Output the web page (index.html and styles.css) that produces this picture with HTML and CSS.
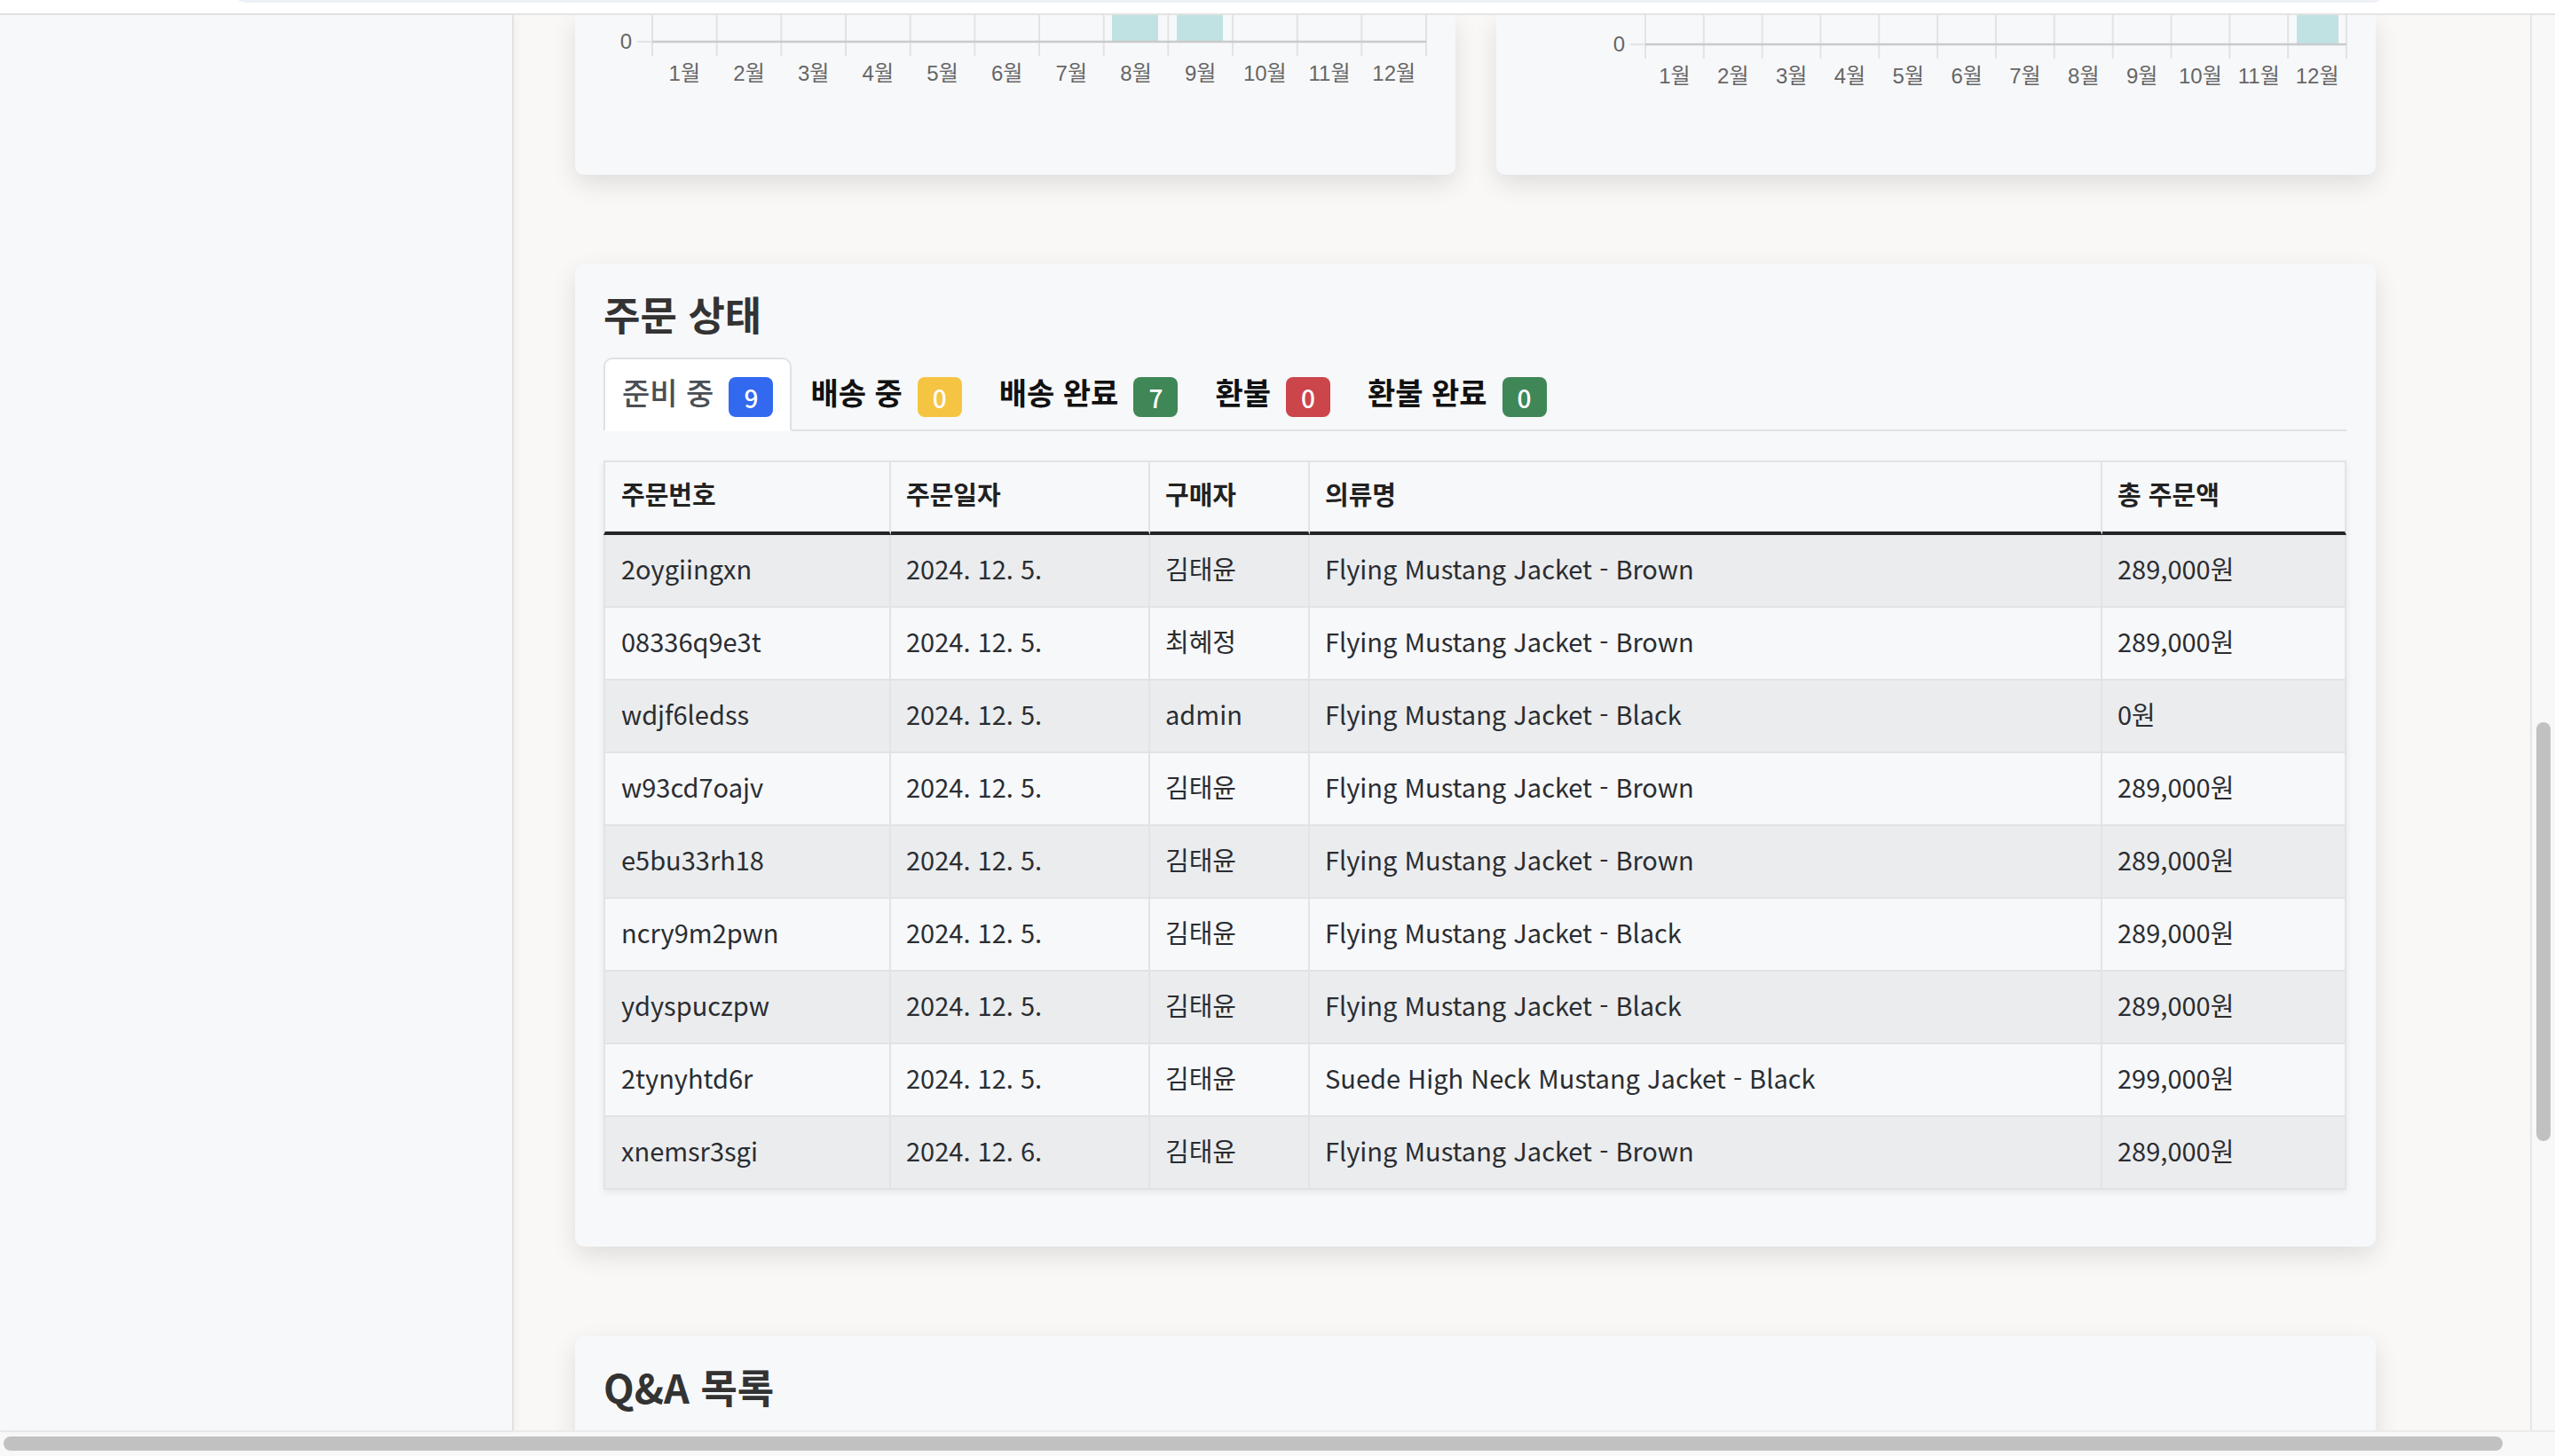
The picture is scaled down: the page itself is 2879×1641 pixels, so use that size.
FILE: index.html
```html
<!DOCTYPE html>
<html lang="ko">
<head>
<meta charset="utf-8">
<title>관리자 대시보드</title>
<link rel="stylesheet" href="styles.css">
</head>
<body>
<div class="app">
  <header class="topbar"><div class="topbar-clip"><div class="topbar-pill"></div></div></header>
  <div class="body-row">
    <aside class="sidebar"></aside>
    <main class="main">
      <div class="charts">
        <section class="card chart-card">
          <svg class="chart" width="992" height="180" viewBox="0 0 992 180">
            <rect class="bar" x="605" y="0" width="52" height="30"/>
            <rect class="bar" x="678" y="0" width="52" height="30"/>
            <g class="grid">
              <line x1="87" y1="0" x2="87" y2="46"/>
              <line x1="159.7" y1="0" x2="159.7" y2="46"/>
              <line x1="232.3" y1="0" x2="232.3" y2="46"/>
              <line x1="305" y1="0" x2="305" y2="46"/>
              <line x1="377.7" y1="0" x2="377.7" y2="46"/>
              <line x1="450.3" y1="0" x2="450.3" y2="46"/>
              <line x1="523" y1="0" x2="523" y2="46"/>
              <line x1="595.7" y1="0" x2="595.7" y2="46"/>
              <line x1="668.3" y1="0" x2="668.3" y2="46"/>
              <line x1="741" y1="0" x2="741" y2="46"/>
              <line x1="813.7" y1="0" x2="813.7" y2="46"/>
              <line x1="886.3" y1="0" x2="886.3" y2="46"/>
              <line x1="959" y1="0" x2="959" y2="46"/>
              <line x1="70" y1="30" x2="87" y2="30"/>
            </g>
            <line class="axis" x1="87" y1="30" x2="959" y2="30"/>
            <text class="ylabel" x="64" y="38">0</text>
            <g class="xlabels">
              <text x="123.3" y="74">1월</text>
              <text x="196" y="74">2월</text>
              <text x="268.7" y="74">3월</text>
              <text x="341.3" y="74">4월</text>
              <text x="414" y="74">5월</text>
              <text x="486.7" y="74">6월</text>
              <text x="559.3" y="74">7월</text>
              <text x="632" y="74">8월</text>
              <text x="704.7" y="74">9월</text>
              <text x="777.3" y="74">10월</text>
              <text x="850" y="74">11월</text>
              <text x="922.7" y="74">12월</text>
            </g>
          </svg>
        </section>
        <section class="card chart-card">
          <svg class="chart" width="991" height="180" viewBox="0 0 991 180">
            <rect class="bar" x="902" y="0" width="47" height="33"/>
            <g class="grid">
              <line x1="168" y1="0" x2="168" y2="49"/>
              <line x1="233.8" y1="0" x2="233.8" y2="49"/>
              <line x1="299.7" y1="0" x2="299.7" y2="49"/>
              <line x1="365.5" y1="0" x2="365.5" y2="49"/>
              <line x1="431.3" y1="0" x2="431.3" y2="49"/>
              <line x1="497.2" y1="0" x2="497.2" y2="49"/>
              <line x1="563" y1="0" x2="563" y2="49"/>
              <line x1="628.8" y1="0" x2="628.8" y2="49"/>
              <line x1="694.7" y1="0" x2="694.7" y2="49"/>
              <line x1="760.5" y1="0" x2="760.5" y2="49"/>
              <line x1="826.3" y1="0" x2="826.3" y2="49"/>
              <line x1="892.2" y1="0" x2="892.2" y2="49"/>
              <line x1="958" y1="0" x2="958" y2="49"/>
              <line x1="151" y1="33" x2="168" y2="33"/>
            </g>
            <line class="axis" x1="168" y1="33" x2="958" y2="33"/>
            <text class="ylabel" x="145" y="41">0</text>
            <g class="xlabels">
              <text x="200.9" y="77">1월</text>
              <text x="266.8" y="77">2월</text>
              <text x="332.6" y="77">3월</text>
              <text x="398.4" y="77">4월</text>
              <text x="464.3" y="77">5월</text>
              <text x="530.1" y="77">6월</text>
              <text x="595.9" y="77">7월</text>
              <text x="661.8" y="77">8월</text>
              <text x="727.6" y="77">9월</text>
              <text x="793.4" y="77">10월</text>
              <text x="859.3" y="77">11월</text>
              <text x="925.1" y="77">12월</text>
            </g>
          </svg>
        </section>
      </div>

      <section class="card orders">
        <h4 class="card-title">주문 상태</h4>
        <nav class="tabs">
          <a class="tab active"><span class="tab-label">준비 중</span><span class="badge b-blue">9</span></a>
          <a class="tab"><span class="tab-label">배송 중</span><span class="badge b-yellow">0</span></a>
          <a class="tab"><span class="tab-label">배송 완료</span><span class="badge b-green">7</span></a>
          <a class="tab"><span class="tab-label">환불</span><span class="badge b-red">0</span></a>
          <a class="tab"><span class="tab-label">환불 완료</span><span class="badge b-green">0</span></a>
        </nav>
        <table class="orders-table">
          <colgroup>
            <col class="c1"><col class="c2"><col class="c3"><col class="c4"><col class="c5">
          </colgroup>
          <thead>
            <tr><th>주문번호</th><th>주문일자</th><th>구매자</th><th>의류명</th><th>총 주문액</th></tr>
          </thead>
          <tbody>
            <tr><td>2oygiingxn</td><td>2024. 12. 5.</td><td>김태윤</td><td>Flying Mustang Jacket - Brown</td><td>289,000원</td></tr>
            <tr><td>08336q9e3t</td><td>2024. 12. 5.</td><td>최혜정</td><td>Flying Mustang Jacket - Brown</td><td>289,000원</td></tr>
            <tr><td>wdjf6ledss</td><td>2024. 12. 5.</td><td>admin</td><td>Flying Mustang Jacket - Black</td><td>0원</td></tr>
            <tr><td>w93cd7oajv</td><td>2024. 12. 5.</td><td>김태윤</td><td>Flying Mustang Jacket - Brown</td><td>289,000원</td></tr>
            <tr><td>e5bu33rh18</td><td>2024. 12. 5.</td><td>김태윤</td><td>Flying Mustang Jacket - Brown</td><td>289,000원</td></tr>
            <tr><td>ncry9m2pwn</td><td>2024. 12. 5.</td><td>김태윤</td><td>Flying Mustang Jacket - Black</td><td>289,000원</td></tr>
            <tr><td>ydyspuczpw</td><td>2024. 12. 5.</td><td>김태윤</td><td>Flying Mustang Jacket - Black</td><td>289,000원</td></tr>
            <tr><td>2tynyhtd6r</td><td>2024. 12. 5.</td><td>김태윤</td><td>Suede High Neck Mustang Jacket - Black</td><td>299,000원</td></tr>
            <tr><td>xnemsr3sgi</td><td>2024. 12. 6.</td><td>김태윤</td><td>Flying Mustang Jacket - Brown</td><td>289,000원</td></tr>
          </tbody>
        </table>
      </section>

      <section class="card qna">
        <h4 class="card-title">Q&amp;A 목록</h4>
      </section>
    </main>
    <div class="vscroll"><div class="vthumb"></div></div>
  </div>
  <div class="hscroll"><div class="hthumb"></div></div>
</div>
</body>
</html>
```

FILE: styles.css
```css
* { box-sizing: border-box; }

html, body {
  margin: 0;
  padding: 0;
  width: 2879px;
  height: 1641px;
  overflow: hidden;
  background: #f9f8f6;
  font-family: "Noto Sans CJK KR", "Noto Sans", sans-serif;
  color: #212529;
}

.app {
  display: flex;
  flex-direction: column;
  width: 2879px;
  height: 1641px;
}

/* top bar */
.topbar {
  height: 17px;
  flex: 0 0 17px;
  background: #ffffff;
  border-bottom: 2px solid #e3e3e3;
}
.topbar-clip {
  margin-left: 260px;
  width: 2430px;
  height: 3px;
  overflow: hidden;
}
.topbar-pill {
  height: 40px;
  margin-top: -37px;
  background: #edf1f7;
  border-radius: 18px;
}

/* body */
.body-row {
  flex: 1 1 auto;
  display: flex;
  min-height: 0;
}
.sidebar {
  width: 579px;
  flex: 0 0 579px;
  background: #f7f8fa;
  border-right: 2px solid #e2e2e2;
  box-shadow: 3px 0 10px rgba(0, 0, 0, 0.035);
  position: relative;
  z-index: 1;
}
.main {
  flex: 1 1 auto;
  min-width: 0;
  overflow: hidden;
  padding: 0 174px 0 69px;
  background: #f9f8f6;
}
.vscroll {
  width: 28px;
  flex: 0 0 28px;
  border-left: 2px solid #e6e6e6;
  background: #f8f8f8;
  padding: 797px 0 0 5px;
}
.vthumb {
  width: 16px;
  height: 472px;
  border-radius: 8px;
  background: #c1c1c1;
}
.hscroll {
  height: 29px;
  flex: 0 0 29px;
  border-top: 2px solid #ebebeb;
  background: #f8f8f8;
  padding: 5px 0 0 4px;
}
.hthumb {
  width: 2816px;
  height: 16px;
  border-radius: 8px;
  background: #c1c1c1;
}

/* cards */
.card {
  background: #f7f8fa;
  border-radius: 10px;
  box-shadow: 0 10px 28px rgba(0, 0, 0, 0.11);
}
.charts {
  display: flex;
  gap: 46px;
  height: 180px;
}
.chart-card {
  flex: 1 1 0;
  border-radius: 0 0 10px 10px;
  overflow: hidden;
}
.chart { display: block; }
.chart .bar { fill: #c1e2e2; }
.chart .grid line { stroke: #e2e3e5; stroke-width: 2; }
.chart .axis { stroke: #c9cacc; stroke-width: 2.5; }
.chart text {
  font-family: "Liberation Sans", "Noto Sans CJK KR", sans-serif;
  font-size: 24px;
  fill: #666666;
}
.chart .ylabel { text-anchor: end; }
.chart .xlabels text { text-anchor: middle; }

.orders {
  margin-top: 100px;
  padding: 32px 33px 64px 32px;
}
.card-title {
  margin: 0;
  font-size: 45px;
  line-height: 50px;
  font-weight: 700;
  color: #333333;
}

/* tabs */
.tabs {
  display: flex;
  margin-top: 24px;
  border-bottom: 2px solid #dee2e6;
}
.tab {
  display: flex;
  align-items: center;
  gap: 17px;
  height: 83px;
  padding: 0 19px 6px 19px;
  margin-bottom: -2px;
  border: 2px solid transparent;
  border-radius: 10px 10px 0 0;
  font-size: 34px;
  font-weight: 700;
  color: #111111;
}
.tab-label { white-space: nowrap; }
.tab.active {
  background: #ffffff;
  border-color: #dee2e6 #dee2e6 #ffffff;
  color: #4a4f55;
  font-weight: 500;
}
.badge {
  display: inline-flex;
  align-items: center;
  justify-content: center;
  min-width: 50px;
  height: 45px;
  padding: 0 14px;
  margin-top: 12px;
  border-radius: 8px;
  font-size: 28px;
  font-weight: 500;
  color: #ffffff;
}
.b-blue { background: #3269ef; }
.b-yellow { background: #f5c443; }
.b-green { background: #3f8757; }
.b-red { background: #cb454a; }

/* table */
.orders-table {
  margin-top: 33px;
  width: 1964px;
  border-collapse: separate;
  border-spacing: 0;
  table-layout: fixed;
  font-size: 29px;
  line-height: 42px;
  box-shadow: 0 3px 8px rgba(0, 0, 0, 0.07);
}
.c1 { width: 324px; }
.c2 { width: 292px; }
.c3 { width: 180px; }
.c4 { width: 893px; }
.c5 { width: 275px; }

.orders-table th,
.orders-table td {
  text-align: left;
  padding: 16px 17px 22px 17px;
  border-right: 2px solid #e2e3e5;
  border-bottom: 2px solid #e2e3e5;
  color: #2a2d31;
  font-weight: 400;
  white-space: nowrap;
}
.orders-table th:first-child,
.orders-table td:first-child {
  border-left: 2px solid #e2e3e5;
  padding-left: 18px;
}
.orders-table th {
  font-weight: 700;
  color: #222222;
  padding: 14px 17px 22px 17px;
  border-top: 2px solid #e2e3e5;
  border-bottom: 4px solid #222629;
}
.orders-table tbody tr:nth-child(odd) td { background: #ebecee; }
.orders-table tbody tr:nth-child(even) td { background: #f7f8fa; }

.qna {
  margin-top: 101px;
  padding: 32px;
  height: 200px;
  border-radius: 10px 10px 0 0;
}
```
